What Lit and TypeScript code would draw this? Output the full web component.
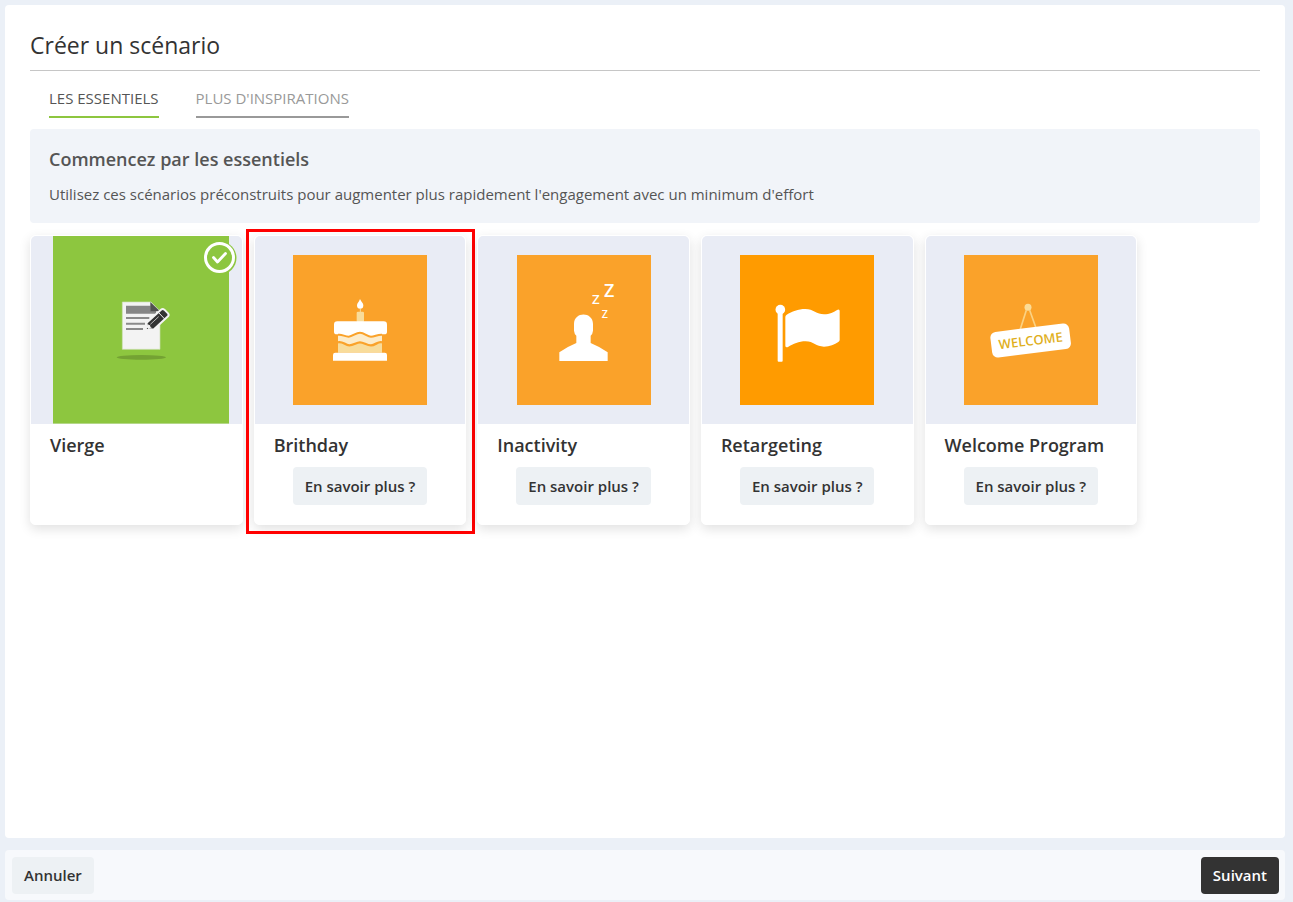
import { LitElement, html, svg, css, nothing, TemplateResult } from "lit";
import { customElement, property, state } from "lit/decorators.js";
import { classMap } from "lit/directives/class-map.js";

interface Scenario {
  id: string;
  name: string;
  more: boolean;
  marked?: boolean;
}

const SCENARIOS: Scenario[] = [
  { id: "blank", name: "Vierge", more: false },
  { id: "birthday", name: "Brithday", more: true, marked: true },
  { id: "inactivity", name: "Inactivity", more: true },
  { id: "retargeting", name: "Retargeting", more: true },
  { id: "welcome", name: "Welcome Program", more: true },
];

// Each drawing sits in the coordinates of its own tile.
const ART: Record<string, TemplateResult> = {
  blank: svg`
    <path d="M0 187.500h176" stroke="#b4d788"/>
    <g transform="translate(57 54) scale(0.33333)">
      <ellipse cx="94" cy="202" rx="74" ry="7" fill="#74a233"/>
      <path d="M37 36h86l27 27v115H37z" fill="#f3f3f3" stroke="#cfe0b8" stroke-width="2"/>
      <path d="M48 47h74v16h16v8H48z" fill="#868686"/>
      <path d="M121 36l29 28h-29z" fill="#505050"/>
      <path d="M48 84h70M48 101h57M48 117h51" stroke="#8a8a8a" stroke-width="6"/>
      <path d="M107 121l3-23 43-39q5-4 10 0l11 11q4 5 0 9l-42 39z" fill="#333" stroke="#f3f3f3" stroke-width="6" stroke-linejoin="round"/>
      <path d="M144 66l20 21" stroke="#f3f3f3" stroke-width="3"/>
      <path d="M121 103l25-23" stroke="#bdbdbd" stroke-width="3"/>
      <path d="M113 100q1 6 7 6 0 7 7 9l-12 2-5-5z" fill="#f3f3f3"/>
    </g>`,
  birthday: svg`
    <g transform="translate(27 35) scale(0.33333)">
      <path d="M120 27c4 9 10 12 10 19a9.500 10.500 0 0 1-19 0c0-7 6-10 9-19z" fill="#fff"/>
      <path d="M121 57v10" stroke="#f8dc9b" stroke-width="3"/>
      <rect x="110" y="65" width="22" height="32" rx="4" fill="#f8dc9b"/>
      <path d="M54 125h132v40H54z" fill="#fceccb"/>
      <path d="M54 157c13-5 21 9 34 9s21-9 32-9 20 9 33 9 21-13 33-9v31H54z" fill="#f8dc9b"/>
      <path d="M54 157c13-5 21 9 34 9s21-9 32-9 20 9 33 9 21-13 33-9" fill="none" stroke="#faa22a" stroke-width="7"/>
      <path d="M52 94h139q10 0 10 10v22q0 7-8 7h-9c-13 0-20 7-31 7s-20-13-33-13-22 12-34 12-19-6-30-6H50q-8 0-8-8v-21q0-10 10-10z" fill="#fff"/>
      <path d="M54 134h4c10 0 17 6 28 6 12 0 21-12 34-12s22 12 33 12 18-6 31-6h2" fill="none" stroke="#faa22a" stroke-width="6"/>
      <path d="M46 188h148q7 0 7 7v17H39v-17q0-7 7-7z" fill="#fff"/>
    </g>`,
  inactivity: svg`
    <g transform="translate(23 15) scale(0.33333)">
      <path d="M102 162c0-38 57-38 57 0v20q-1 10-7 15v22q27 11 51 28v26H58v-26q24-17 51-28v-22q-6-5-7-15z" fill="#fff"/>
      <g class="art-text" fill="#fff">
        <text x="192" y="81" font-size="54" font-weight="600">Z</text>
        <text x="156" y="102" font-size="40" font-weight="600">Z</text>
        <text x="185" y="143" font-size="32" font-weight="600">Z</text>
      </g>
    </g>`,
  retargeting: svg`
    <g transform="translate(20 35) scale(0.33333)" fill="#fff">
      <circle cx="61" cy="59" r="14.500"/>
      <rect x="53" y="64" width="15" height="151" rx="3"/>
      <path d="M76 81q0-4 4-7c16-9 34-17 56-17 24 0 34 16 56 16 17 0 29-7 41-14q6-2 6 4v87q0 3-4 6c-11 7-26 14-43 14-24 0-31-16-55-16-21 0-37 8-53 17q-8 2-8-4z"/>
    </g>`,
  welcome: svg`
    <g transform="translate(16 40) scale(0.33333)">
      <path d="M121 102l18-56M149 46l18 50" stroke="#fbd283" stroke-width="5"/>
      <circle cx="144" cy="37" r="10.500" fill="#fbdc96"/>
      <g transform="rotate(-7 152 137)">
        <rect x="33" y="98" width="238" height="77" rx="17" fill="#fff"/>
        <text class="art-text" x="152" y="151" font-size="39" font-weight="600" text-anchor="middle" fill="#dfaf1d">WELCOME</text>
      </g>
    </g>`,
};

@customElement("scenario-card")
class ScenarioCard extends LitElement {
  @property({ attribute: false }) scenario!: Scenario;
  @property({ type: Boolean }) selected = false;

  static styles = css`
    :host {
      display: block;
      position: relative;
      box-sizing: border-box;
      border: 1px solid #fff;
      border-radius: 5px;
      background: #fff;
      box-shadow: 0 4px 12px rgba(0, 0, 0, 0.12);
      color: #333;
    }
    .media {
      display: flex;
      align-items: center;
      justify-content: center;
      height: 188px;
      border-radius: 5px 5px 0 0;
      background: #e9ecf5;
    }
    .media.blank {
      padding-left: 10px;
    }
    .tile {
      display: block;
      width: 134px;
      height: 150px;
      background: #faa22a;
    }
    .blank .tile {
      width: 176px;
      height: 188px;
      background: #8dc63f;
    }
    .retargeting .tile {
      background: #ff9b00;
    }
    .art-text {
      font-family: "Open Sans", sans-serif;
    }
    .check {
      position: absolute;
      top: 5px;
      right: 5px;
      width: 34px;
      height: 34px;
    }
    .body {
      display: flex;
      flex-direction: column;
      align-items: center;
      padding: 9px 19px 19px;
    }
    .name {
      align-self: stretch;
      margin: 0 0 10px;
      font-size: 18px;
      line-height: 24px;
      font-weight: 600;
      white-space: nowrap;
    }
    .more {
      height: 38px;
      padding: 0 12px;
      border: 0;
      border-radius: 4px;
      background: #edf1f4;
      color: #333;
      font: 600 15px/20px "Open Sans", sans-serif;
      white-space: nowrap;
      cursor: pointer;
    }
    .marker {
      position: absolute;
      inset: -7px -10px -10px -9px;
      border: 3px solid #f00;
      pointer-events: none;
    }
  `;

  render() {
    const s = this.scenario;
    const box = s.id === "blank" ? "0 0 176 188" : "0 0 134 150";
    return html`
      <div class="media ${s.id}">
        <svg class="tile" viewBox=${box} aria-hidden="true">${ART[s.id]}</svg>
      </div>
      ${this.selected
        ? html`<svg class="check" viewBox="0 0 34 34" aria-hidden="true">
            <circle cx="17" cy="17" r="16.500" fill="#8dc63f" />
            <circle cx="16.500" cy="16.500" r="14" fill="none" stroke="#fff" stroke-width="3" />
            <path d="M10.500 16.500l4 4.500 8-8.500" fill="none" stroke="#fff" stroke-width="2.800" stroke-linecap="round" stroke-linejoin="round" />
          </svg>`
        : nothing}
      <div class="body">
        <h3 class="name">${s.name}</h3>
        ${s.more ? html`<button class="more" type="button">En savoir plus ?</button>` : nothing}
      </div>
      ${s.marked ? html`<div class="marker"></div>` : nothing}
    `;
  }
}

@customElement("app-root")
class AppRoot extends LitElement {
  @state() private tab = 0;
  @state() private chosen = "blank";

  static styles = css`
    :host {
      display: flex;
      flex-direction: column;
      gap: 12px;
      box-sizing: border-box;
      min-height: 100vh;
      padding: 5px 8px 2px 5px;
      background: #ebf0f7;
      color: #555;
      font-family: "Open Sans", sans-serif;
      font-size: 15px;
      line-height: 20px;
    }
    .panel {
      flex: 1;
      padding: 24px 25px;
      border-radius: 4px;
      background: #fff;
    }
    .title {
      margin: 0;
      padding-bottom: 9px;
      border-bottom: 1px solid #c6c6c6;
      color: #333;
      font-size: 23px;
      line-height: 32px;
      font-weight: 400;
    }
    .tabs {
      display: flex;
      gap: 37px;
      padding: 17px 19px 11px;
    }
    .tab {
      padding: 0 0 8px;
      border: 0;
      border-bottom: 2px solid #999;
      background: none;
      color: #999;
      font: inherit;
      text-transform: uppercase;
      cursor: pointer;
    }
    .tab.active {
      border-color: #8dc63f;
      color: #555;
    }
    .intro {
      padding: 18px 19px;
      border-radius: 4px;
      background: #f1f4f9;
    }
    .intro-title {
      margin: 0 0 12px;
      font-size: 18px;
      line-height: 25px;
      font-weight: 600;
    }
    .intro-text {
      margin: 0 0 1px;
    }
    .cards {
      display: flex;
      gap: 11px;
      padding-top: 12px;
    }
    .card {
      flex: 0 0 calc(100% / 5.5 - 11px);
      min-height: 290px;
    }
    .footer {
      display: flex;
      justify-content: space-between;
      padding: 7px 6px 6px 7px;
      border-radius: 4px;
      background: #f7f9fc;
    }
    .btn {
      height: 37px;
      padding: 0 12px 2px;
      border: 0;
      border-radius: 4px;
      background: #edf1f4;
      color: #333;
      font: inherit;
      font-weight: 600;
      cursor: pointer;
    }
    .btn.primary {
      background: #333;
      color: #fff;
    }
  `;

  render() {
    const tabs = ["Les essentiels", "Plus d'inspirations"];
    return html`
      <main class="panel">
        <h1 class="title">Créer un scénario</h1>
        <div class="tabs" role="tablist">
          ${tabs.map(
            (label, i) => html`<button
              type="button"
              role="tab"
              aria-selected=${this.tab === i ? "true" : "false"}
              class=${classMap({ tab: true, active: this.tab === i })}
              @click=${() => (this.tab = i)}
            >${label}</button>`
          )}
        </div>
        <section class="intro">
          <h2 class="intro-title">Commencez par les essentiels</h2>
          <p class="intro-text">Utilisez ces scénarios préconstruits pour augmenter plus rapidement l'engagement avec un minimum d'effort</p>
        </section>
        <section class="cards">
          ${SCENARIOS.map(
            (s) => html`<scenario-card
              class="card"
              .scenario=${s}
              ?selected=${this.chosen === s.id}
              @click=${() => (this.chosen = s.id)}
            ></scenario-card>`
          )}
        </section>
      </main>
      <footer class="footer">
        <button class="btn" type="button">Annuler</button>
        <button class="btn primary" type="button">Suivant</button>
      </footer>
    `;
  }
}
